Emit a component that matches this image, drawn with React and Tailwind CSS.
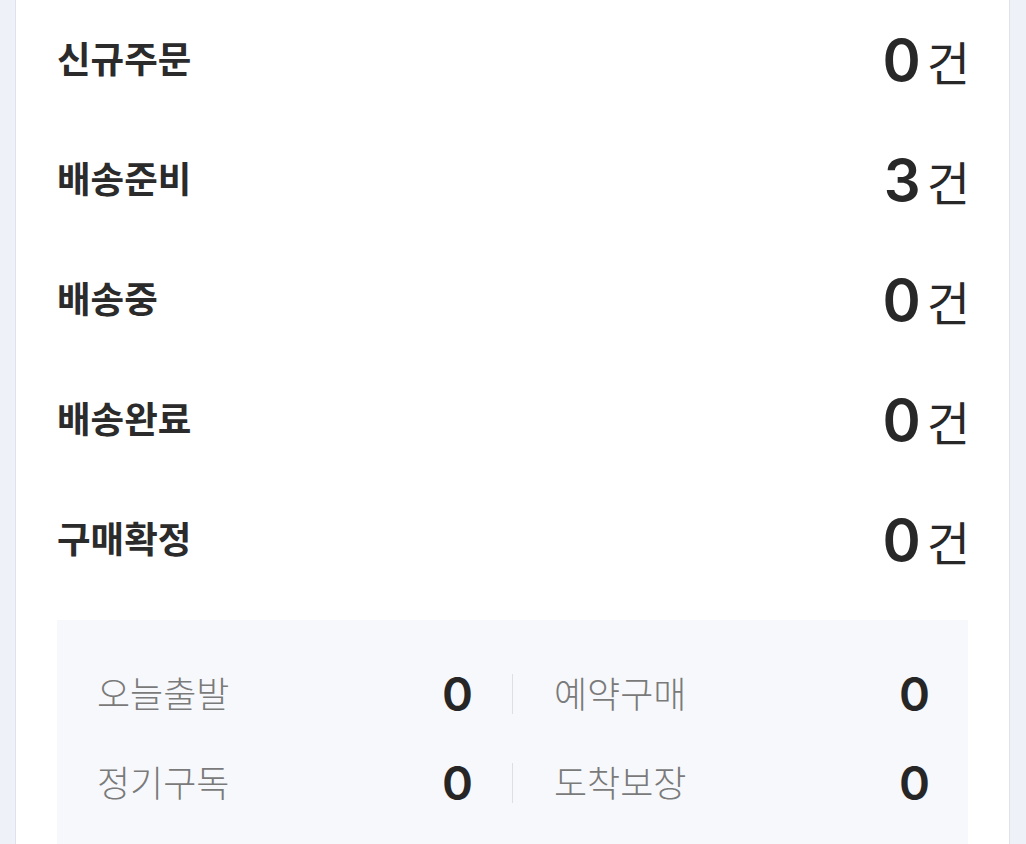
import React from "react";

const rows = [
  { label: "신규주문", count: 0 },
  { label: "배송준비", count: 3 },
  { label: "배송중", count: 0 },
  { label: "배송완료", count: 0 },
  { label: "구매확정", count: 0 },
];

const extras = [
  [
    { label: "오늘출발", count: 0 },
    { label: "예약구매", count: 0 },
  ],
  [
    { label: "정기구독", count: 0 },
    { label: "도착보장", count: 0 },
  ],
];

export default function App() {
  return (
    <div
      className="w-[1026px] h-[844px] overflow-hidden bg-[#eef1f7] flex"
      style={{ fontFamily: '"Noto Sans CJK KR", "Noto Sans", sans-serif' }}
    >
      <div className="ml-[15px] w-[995px] h-full bg-white border-x border-[#dfe2ea] pl-[41px] pr-[41px]">
        {rows.map((r) => (
          <div key={r.label} className="h-[120px] flex items-center justify-between">
            <span className="text-[36.5px] font-semibold text-[#2b2b2b] -mt-[4px]">
              {r.label}
            </span>
            <span className="flex items-baseline text-[#282828] -mr-[2px]">
              <span className="text-[58px] font-semibold leading-none font-['Inter',sans-serif]">
                {r.count}
              </span>
              <span className="text-[47px] leading-none ml-[6px]">건</span>
            </span>
          </div>
        ))}
        <div className="mt-[20px] bg-[#f7f8fb] px-[40px] pt-[29px] pb-[20px]">
          {extras.map((pair, i) => (
            <div key={i} className="h-[89px] flex items-center">
              <Cell {...pair[0]} />
              <div className="w-px h-[40px] bg-[#dedfe3] mx-[41px]" />
              <Cell {...pair[1]} />
            </div>
          ))}
        </div>
      </div>
    </div>
  );
}

function Cell({ label, count }) {
  return (
    <div className="flex-1 flex items-center justify-between">
      <span className="text-[36px] font-light text-[#7a7a7a] -mt-[3px]">{label}</span>
      <span className="text-[47px] font-semibold text-[#262626] leading-none font-['Inter',sans-serif] -mr-[2px]">
        {count}
      </span>
    </div>
  );
}
